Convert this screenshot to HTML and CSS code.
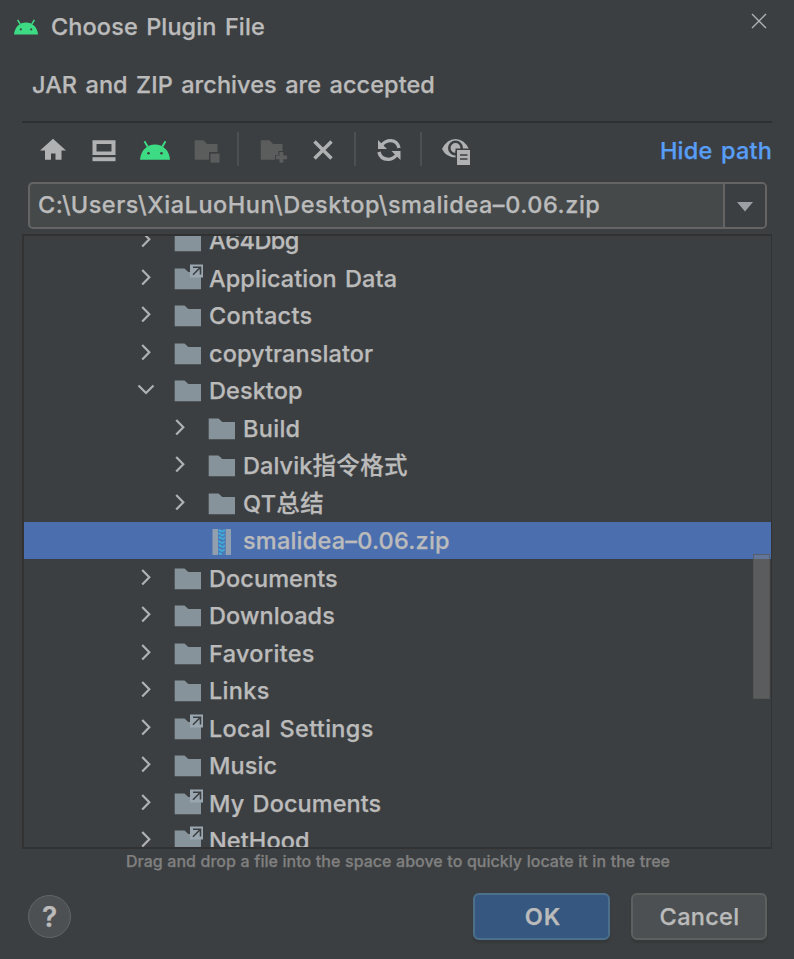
FILE: index.html
```
<!DOCTYPE html>
<html lang="en">
<head>
<meta charset="utf-8">
<title>Choose Plugin File</title>
<link rel="stylesheet" href="styles.css">
</head>
<body>
<svg class="defs" width="0" height="0">
  <defs>
    <symbol id="android" viewBox="0 0 30 20"><path d="M4.500 1L7.700 6.500M25.500 1L22.300 6.500" fill="none" stroke="#3ddc84" stroke-width="1.900"/><path d="M0 19.500C.6 10.300 7 4.300 15 4.300s14.400 6 15 15.200z" fill="#3ddc84"/><circle cx="8.500" cy="13" r="1.300" fill="#3c3f41"/><circle cx="21.500" cy="13" r="1.300" fill="#3c3f41"/></symbol>
    <symbol id="folder" viewBox="0 0 30 38"><path d="M.7 8.500H10.500L14.300 12H27V29.300H.7z" fill="#87939a"/></symbol>
    <symbol id="link" viewBox="0 0 30 38"><path d="M.7 8.500H10.500L14.300 12H27V29.300H.7z" fill="#87939a"/><path d="M16 4.500H29V17.500H16z" fill="#9aa7b0"/><path d="M19 14.800L26 7.800M19 7.200H26.500V14.500" fill="none" stroke="#3c3f41" stroke-width="1.600"/></symbol>
    <symbol id="right" viewBox="0 0 12 38"><path d="M2.200 10L9.300 17.300L2.200 24.600" fill="none" stroke="#afb1b3" stroke-width="2.200"/></symbol>
    <symbol id="zip" viewBox="0 0 30 38"><path d="M4.500 7H10V33H4.500zM17.500 7H23V33H17.500z" fill="#929fae"/><path d="M10 7h7.500v26H10z" fill="#4a7cb8"/><path d="M11 8l2.500 1.500M17 8l-3 2M10.500 11l3 2M16.500 12l-3 2M11 15l2.500 1.500M17 15.500l-3 2M10.500 19l3 2M16.500 19.500l-3 2M11 23l2.500 1.500M17 23.500l-3 2M10.500 27l3 2M16.500 27.500l-3 2M11 31l2.500 1.500" stroke="#40b6e0" stroke-width="1.500"/></symbol>
  </defs>
</svg>
<div class="dialog">
  <header class="titlebar">
    <svg class="logo"><use href="#android"/></svg>
    <h1 class="title">Choose Plugin File</h1>
    <svg class="close" viewBox="0 0 16 16"><path d="M1 1L15 15M15 1L1 15" stroke="#afb1b3" stroke-width="1.400"/></svg>
  </header>
  <p class="message">JAR and ZIP archives are accepted</p>
  <div class="toolbar">
    <svg class="tools" viewBox="0 0 460 50">
      <g fill="#afb1b3">
        <path d="M31 13.700L44 25.500H39.500V34.800H33.500V28.500H29V34.800H23V25.500H18z"/>
        <path fill-rule="evenodd" d="M70.500 15.300H93.500V30H70.500zM74.500 19V26.500H89.500V19z"/><path d="M70.500 32.200H93.500V36.200H70.500z"/>
      </g>
      <svg x="118" y="15.200" width="30" height="20"><use href="#android" width="30" height="20"/></svg>
      <g fill="#5b5c5c"><path d="M172.700 15.200H181.500L185 19H195.500V27H187V34.700H172.700z"/><path d="M188.500 28.700H197.500V37.700H188.500z"/>
      <path d="M238.800 15.200H247.500L251 19H260.500V26H256.500V30H253V34.700H238.800z"/><path d="M257.500 27H261.300V30.600H265V34.200H261.300V37.700H257.500V34.200H254V30.600H257.500z"/></g>
      <path d="M216 7V41M333 7V41M399 7V41" stroke="#515355" stroke-width="1.700"/>
      <path d="M292.500 16.500L309.500 33.500M309.500 16.500L292.500 33.500" stroke="#afb1b3" stroke-width="3.500"/>
      <g fill="none" stroke="#afb1b3" stroke-width="3.400"><path d="M359.500 20.500Q363 15.500 369 15.600Q375.500 16.100 377 23"/><path d="M356.900 27Q358.500 34 366 34.400Q371 34.400 374.500 30"/></g>
      <path d="M356 15V24H365zM378.500 26H369.500L378.500 35z" fill="#afb1b3"/>
      <path fill-rule="evenodd" d="M420 24Q425 14 433.500 14T447 24H433Q433 28 435 32.500Q424.500 33 420 24z" fill="#afb1b3"/>
      <circle cx="433.500" cy="23" r="6.200" fill="none" stroke="#3c3f41" stroke-width="2.600"/><circle cx="433.500" cy="23" r="3" fill="#afb1b3"/>
      <path d="M433.500 23.500H449V41H433.500z" fill="#3c3f41"/><path d="M435 25H448V40H435z" fill="#afb1b3"/><path d="M438 30H445.500M438 34H445.500" stroke="#3c3f41" stroke-width="1.700"/>
    </svg>
    <a class="hide">Hide path</a>
  </div>
  <div class="pathbox">
    <span class="path">C:\Users\XiaLuoHun\Desktop\smalidea–0.06.zip</span>
    <span class="drop"><svg width="16" height="10" viewBox="0 0 16 10"><path d="M0 0H16L8 9.500z" fill="#9c9fa3"/></svg></span>
  </div>
  <div class="tree">
    <div class="rows">
      <div class="row"><svg class="arrow"><use href="#right"/></svg><svg class="icon"><use href="#folder"/></svg><span class="tight">A64Dbg</span></div>
      <div class="row"><svg class="arrow"><use href="#right"/></svg><svg class="icon"><use href="#link"/></svg><span>Application Data</span></div>
      <div class="row"><svg class="arrow"><use href="#right"/></svg><svg class="icon"><use href="#folder"/></svg><span class="loose">Contacts</span></div>
      <div class="row"><svg class="arrow"><use href="#right"/></svg><svg class="icon"><use href="#folder"/></svg><span>copytranslator</span></div>
      <div class="row"><svg class="arrow open" viewBox="0 0 18 38"><path d="M1.500 13.500L9 21L16.500 13.500" fill="none" stroke="#afb1b3" stroke-width="2.200"/></svg><svg class="icon"><use href="#folder"/></svg><span>Desktop</span></div>
      <div class="row child"><svg class="arrow"><use href="#right"/></svg><svg class="icon"><use href="#folder"/></svg><span class="loose">Build</span></div>
      <div class="row child"><svg class="arrow"><use href="#right"/></svg><svg class="icon"><use href="#folder"/></svg><span>Dalvik<b class="cjk">指令格式</b></span></div>
      <div class="row child"><svg class="arrow"><use href="#right"/></svg><svg class="icon"><use href="#folder"/></svg><span class="loose">QT<b class="cjk">总结</b></span></div>
      <div class="row child selected"><svg class="arrow"></svg><svg class="icon"><use href="#zip"/></svg><span class="zipname">smalidea–0.06.zip</span></div>
      <div class="row"><svg class="arrow"><use href="#right"/></svg><svg class="icon"><use href="#folder"/></svg><span>Documents</span></div>
      <div class="row"><svg class="arrow"><use href="#right"/></svg><svg class="icon"><use href="#folder"/></svg><span>Downloads</span></div>
      <div class="row"><svg class="arrow"><use href="#right"/></svg><svg class="icon"><use href="#folder"/></svg><span class="loose">Favorites</span></div>
      <div class="row"><svg class="arrow"><use href="#right"/></svg><svg class="icon"><use href="#folder"/></svg><span class="loose">Links</span></div>
      <div class="row"><svg class="arrow"><use href="#right"/></svg><svg class="icon"><use href="#link"/></svg><span class="loose">Local Settings</span></div>
      <div class="row"><svg class="arrow"><use href="#right"/></svg><svg class="icon"><use href="#folder"/></svg><span>Music</span></div>
      <div class="row"><svg class="arrow"><use href="#right"/></svg><svg class="icon"><use href="#link"/></svg><span>My Documents</span></div>
      <div class="row"><svg class="arrow"><use href="#right"/></svg><svg class="icon"><use href="#link"/></svg><span>NetHood</span></div>
    </div>
    <div class="thumb"></div>
  </div>
  <p class="hint">Drag and drop a file into the space above to quickly locate it in the tree</p>
  <footer class="footer">
    <button class="help">?</button>
    <button class="btn ok">OK</button>
    <button class="btn cancel">Cancel</button>
  </footer>
</div>
</body>
</html>
```
FILE: styles.css
```
* { box-sizing: border-box; }
body { margin: 0; background: #3c3f41; color: #bbbbbb; font: 500 23.5px/30px Inter, "Noto Sans CJK SC", sans-serif; word-spacing: 2px; -webkit-text-stroke: 0.25px; }
svg { display: block; flex: none; }
h1, p { margin: 0; font-size: inherit; font-weight: 500; white-space: nowrap; }
.defs { position: absolute; }
.dialog { width: 794px; height: 959px; overflow: hidden; }
.titlebar { display: flex; height: 54px; padding: 12px 27px 0 14px; }
.logo { width: 24px; height: 16px; margin-top: 7px; }
.title { margin-left: 13px; flex: 1; letter-spacing: 0.1px; }
.close { width: 16px; height: 16px; margin-top: 1px; }
.message { height: 69px; margin: 0 22px; padding: 16px 10px 0; border-bottom: 2px solid #2d2f31; letter-spacing: 0.07px; }
.toolbar { display: flex; justify-content: space-between; margin: 2px 22px 0; height: 57px; }
.tools { width: 460px; height: 50px; }
.hide { color: #589df6; padding-top: 11px; letter-spacing: 0.2px; }
.pathbox { display: flex; width: 739px; height: 47px; margin-left: 28px; border: 2px solid #646464; border-radius: 5px; background: #45494a; overflow: hidden; }
.path { flex: 1; padding: 6px 0 0 8px; white-space: nowrap; letter-spacing: 0.54px; }
.drop { display: flex; align-items: center; justify-content: center; width: 42px; padding: 3px 0 0 0; border-left: 2px solid #646464; background: #3c3f41; }
.tree { position: relative; height: 615px; margin: 5px 22px 0; border: solid #323232; border-width: 2px 1px 2px 2px; overflow: hidden; }
.rows { margin-top: -14px; }
.row { display: flex; height: 37.5px; padding-left: 116px; line-height: 37.5px; white-space: nowrap; letter-spacing: 0.07px; }
.row.child { padding-left: 150px; }
.row.selected { background: linear-gradient(#4b6eaf, #4b6eaf) 0 0 / 100% 37px no-repeat; }
.row .loose { letter-spacing: 0.3px; }
.row .tight { letter-spacing: -0.5px; }
.row .zipname { letter-spacing: 0.2px; }
.arrow { width: 12px; height: 38px; margin-right: 22px; }
.arrow.open { width: 18px; margin: 0 19px 0 -3px; }
.icon { width: 30px; height: 38px; margin-right: 5px; }
.row .cjk { font-weight: 500; letter-spacing: 0.4px; }
.thumb { position: absolute; left: 729px; top: 318px; width: 17px; height: 145px; background: rgba(128,128,128,.45); border: 1px solid rgba(80,80,80,.6); }
.hint { height: 44px; font-size: 16px; line-height: 24px; color: #808080; padding-left: 126px; word-spacing: 0.4px; }
.footer { display: flex; align-items: flex-start; padding: 0 27px 0 28px; }
button { font: inherit; color: inherit; padding: 0; }
.help { width: 43px; height: 43px; margin: 2px auto 0 0; border: 1px solid #646668; border-radius: 50%; background: #4c5052; font-size: 28px; font-weight: 600; }
.btn { width: 137px; height: 47px; border: 2px solid #5e6060; border-radius: 6px; background: #4c5052; box-shadow: 0 3px 2px #36393b; }
.cancel { width: 136px; letter-spacing: 0.3px; padding-left: 1px; }
.ok { background: #365880; border-color: #4c708c; margin-right: 21px; font-weight: 600; letter-spacing: 1px; padding-left: 3px; }
```
